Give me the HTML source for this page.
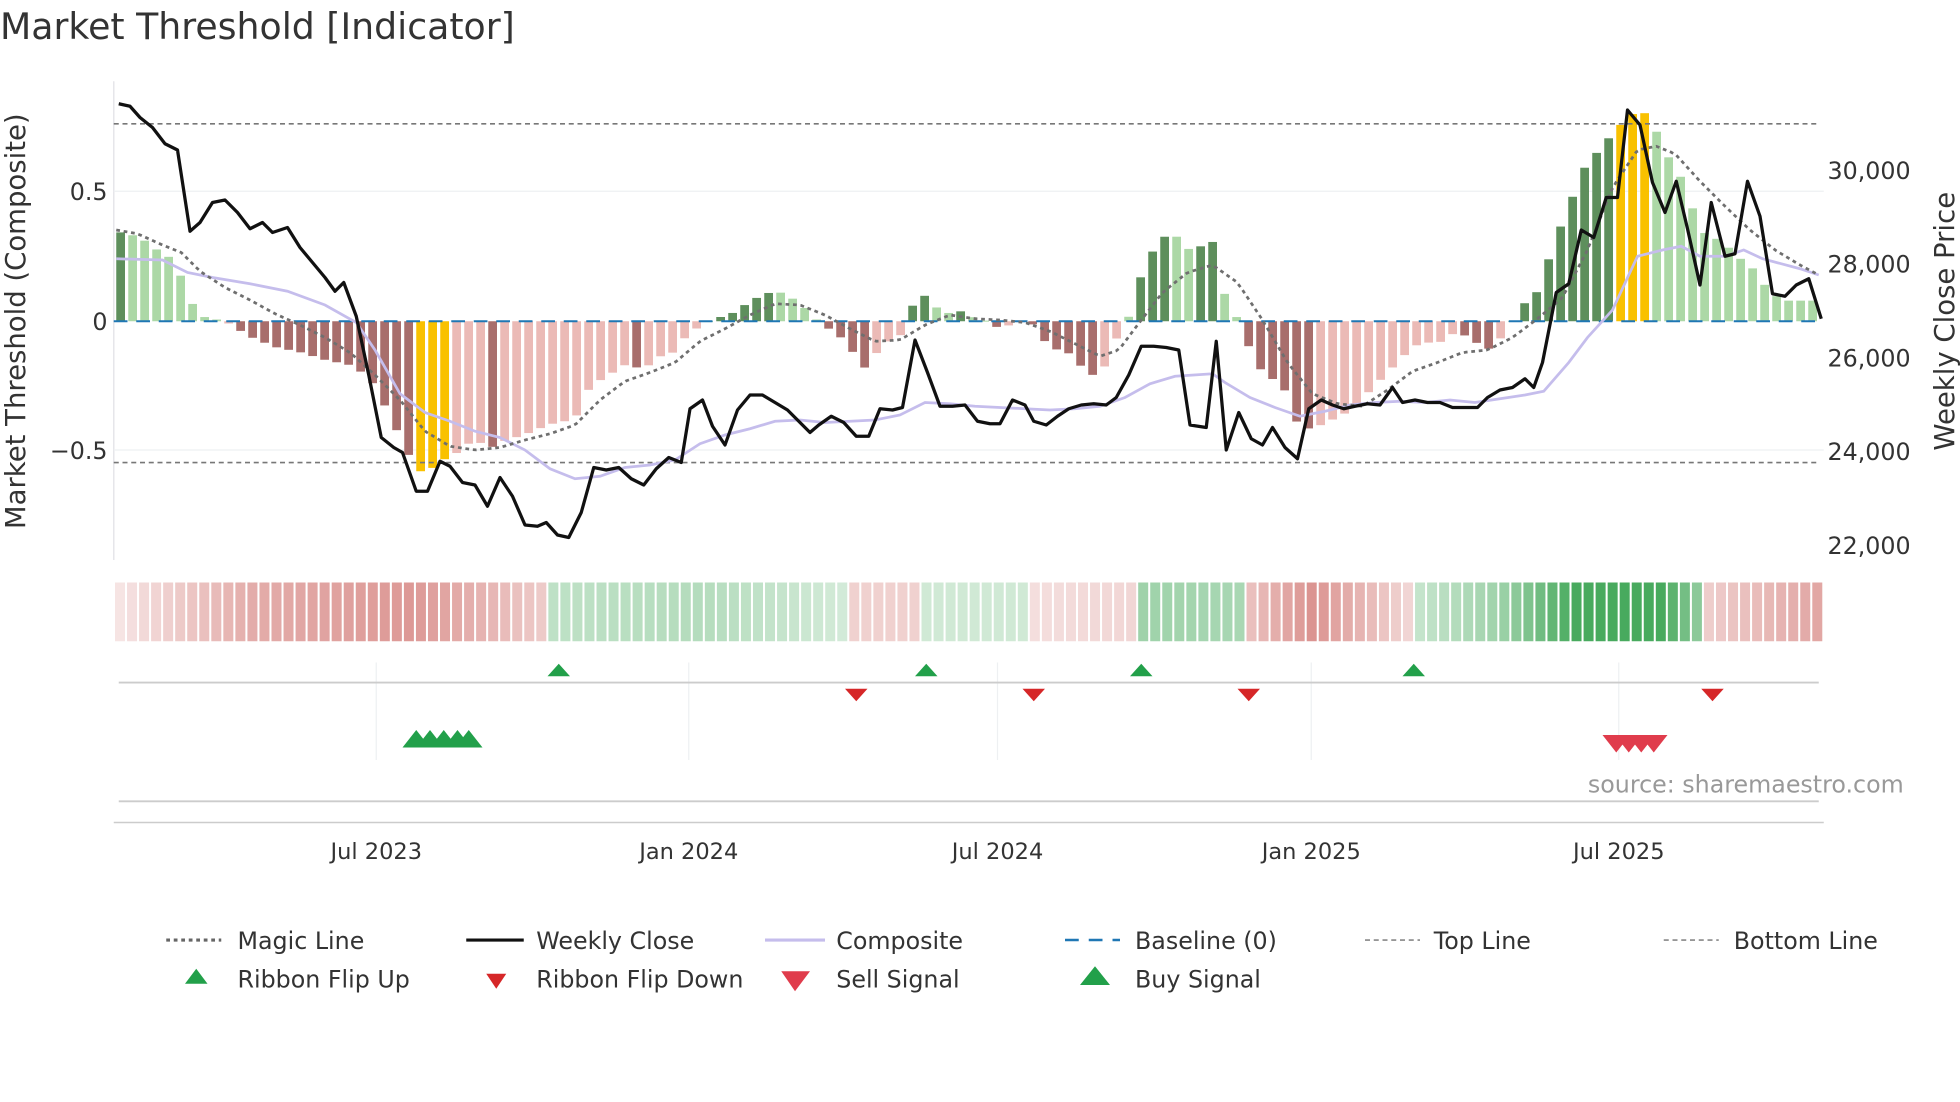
<!DOCTYPE html>
<html><head><meta charset="utf-8"><style>
html,body{margin:0;padding:0;background:#fff;width:1960px;height:1102px;overflow:hidden}
svg{display:block}
text{font-family:"DejaVu Sans","Liberation Sans",sans-serif;fill:#333}
</style></head><body>
<svg id="s" width="1960" height="1102" viewBox="0 0 1568 881.6" xmlns="http://www.w3.org/2000/svg">
<text x="0" y="31" font-size="29">Market Threshold [Indicator]</text>
<line x1="91" y1="65" x2="91" y2="448" stroke="#e6e6ea" stroke-width="1.2"/>
<line x1="91" y1="153" x2="1459" y2="153" stroke="#eef0f2" stroke-width="1"/>
<line x1="91" y1="360" x2="1459" y2="360" stroke="#eef0f2" stroke-width="1"/>
<g id="bars"></g>
<line x1="91" y1="99" x2="1456" y2="99" stroke="#777" stroke-width="1.3" stroke-dasharray="4,3"/>
<line x1="91" y1="370" x2="1456" y2="370" stroke="#777" stroke-width="1.3" stroke-dasharray="4,3"/>
<line x1="91" y1="257" x2="1459" y2="257" stroke="#1f77b4" stroke-width="1.6" stroke-dasharray="11,7"/>
<g id="lines"></g>
<text x="86" y="160" font-size="19" text-anchor="end">0.5</text>
<text x="86" y="264" font-size="19" text-anchor="end">0</text>
<text x="86" y="367" font-size="19" text-anchor="end">−0.5</text>
<text x="1462" y="143" font-size="19">30,000</text>
<text x="1462" y="218" font-size="19">28,000</text>
<text x="1462" y="293" font-size="19">26,000</text>
<text x="1462" y="368" font-size="19">24,000</text>
<text x="1462" y="443" font-size="19">22,000</text>
<text transform="translate(20,257) rotate(-90)" font-size="22" text-anchor="middle">Market Threshold (Composite)</text>
<text transform="translate(1563,257) rotate(-90)" font-size="22" text-anchor="middle">Weekly Close Price</text>
<g id="rib"></g>
<g stroke="#eef0f2" stroke-width="1">
<line x1="301" y1="530" x2="301" y2="608"/><line x1="551" y1="530" x2="551" y2="608"/><line x1="798" y1="530" x2="798" y2="608"/><line x1="1049" y1="530" x2="1049" y2="608"/><line x1="1295" y1="530" x2="1295" y2="608"/>
</g>
<line x1="95" y1="546" x2="1455" y2="546" stroke="#ccc" stroke-width="1.5"/>
<line x1="95" y1="641" x2="1455" y2="641" stroke="#ccc" stroke-width="1.5"/>
<line x1="91" y1="658" x2="1459" y2="658" stroke="#ccc" stroke-width="1.2"/>
<g id="sig"></g>
<text x="1523" y="634" font-size="19" text-anchor="end" style="fill:#999">source: sharemaestro.com</text>
<g font-size="18" text-anchor="middle">
<text x="301" y="687">Jul 2023</text><text x="551" y="687">Jan 2024</text><text x="798" y="687">Jul 2024</text><text x="1049" y="687">Jan 2025</text><text x="1295" y="687">Jul 2025</text>
</g>
<g font-size="19">
<line x1="133" y1="752" x2="177" y2="752" stroke="#666" stroke-width="2.5" stroke-dasharray="3,3"/><text x="190" y="759">Magic Line</text>
<line x1="373" y1="752" x2="419" y2="752" stroke="#111" stroke-width="2.5"/><text x="429" y="759">Weekly Close</text>
<line x1="612" y1="752" x2="660" y2="752" stroke="#c5bdec" stroke-width="2.5"/><text x="669" y="759">Composite</text>
<line x1="852" y1="752" x2="896" y2="752" stroke="#1f77b4" stroke-width="2" stroke-dasharray="11,8"/><text x="908" y="759">Baseline (0)</text>
<line x1="1092" y1="752" x2="1136" y2="752" stroke="#888" stroke-width="1.3" stroke-dasharray="4,3"/><text x="1147" y="759">Top Line</text>
<line x1="1331" y1="752" x2="1375" y2="752" stroke="#888" stroke-width="1.3" stroke-dasharray="4,3"/><text x="1387" y="759">Bottom Line</text>
<polygon points="157,775 166,787 148,787" fill="#22a04a"/><text x="190" y="790">Ribbon Flip Up</text>
<polygon points="389,779 405,779 397,791" fill="#d62728"/><text x="429" y="790">Ribbon Flip Down</text>
<polygon points="625,777 648,777 636,793" fill="#e03c4c"/><text x="669" y="790">Sell Signal</text>
<polygon points="876,773 888,788 864,788" fill="#22a04a"/><text x="908" y="790">Buy Signal</text>
</g>
</svg>
<script>
var NS="http://www.w3.org/2000/svg";
function el(p,t,a){var e=document.createElementNS(NS,t);for(var k in a)e.setAttribute(k,a[k]);document.getElementById(p).appendChild(e);return e;}
function interp(P,x){if(x<=P[0])return P[1];for(var i=0;i<P.length-2;i+=2){if(x>=P[i]&&x<=P[i+2]){var t=(x-P[i])/(P[i+2]-P[i]);return P[i+1]+t*(P[i+3]-P[i+1]);}}return P[P.length-1];}
var comp=[93,.35,100,.34,110,.33,120,.3,130,.26,140,.24,150,.1,160,.02,170,.01,180,0,190,-.03,200,-.06,210,-.08,220,-.1,240,-.12,260,-.15,280,-.17,290,-.2,300,-.25,310,-.35,320,-.45,330,-.55,340,-.6,350,-.55,370,-.5,380,-.45,390,-.5,400,-.47,420,-.44,440,-.4,460,-.38,470,-.27,480,-.23,490,-.2,500,-.17,510,-.18,520,-.17,530,-.13,540,-.12,550,-.05,560,-.02,570,.01,580,.02,590,.04,600,.08,610,.1,620,.12,630,.1,640,.07,650,.02,660,-.02,670,-.05,680,-.1,690,-.19,700,-.13,710,-.08,720,-.06,730,.06,740,.1,750,.05,760,.03,770,.04,780,.01,790,0,800,-.03,810,-.01,820,0,830,-.02,840,-.12,850,-.1,860,-.15,870,-.2,880,-.22,890,-.1,900,0,905,.03,913,.18,922,.27,932,.33,941,.33,950,.28,960,.29,970,.31,980,.1,990,.01,1000,-.11,1010,-.2,1020,-.23,1030,-.28,1040,-.43,1050,-.41,1060,-.4,1070,-.37,1080,-.35,1090,-.3,1100,-.25,1110,-.2,1120,-.15,1130,-.1,1140,-.08,1150,-.09,1160,-.05,1170,-.05,1180,-.08,1190,-.11,1200,-.07,1210,0,1217,.07,1226,.07,1236,.2,1246,.34,1255,.44,1265,.58,1275,.64,1285,.7,1294,.75,1304,.8,1313,.82,1322,.78,1331,.66,1341,.6,1350,.5,1360,.35,1370,.33,1380,.3,1390,.25,1400,.22,1410,.15,1420,.1,1430,.08,1440,.08,1455,.08];
var N=142,prev=0;
for(var i=0;i<N;i++){var x=93+i*9.6,cx=x+3.5,v=interp(comp,cx);var y0=257,y=257-v*206;var c;
 if(v>0.74||v<-0.53)c="#f9c100";else if(v>=0)c=(Math.abs(v)>Math.abs(prev)+0.005)?"#5e8f5c":"#acd8a6";else c=(Math.abs(v)>Math.abs(prev)+0.005)?"#a86e6c":"#ebbab6";
 prev=v;el("bars","rect",{x:x,y:Math.min(y,y0),width:7,height:Math.max(Math.abs(y-y0),0.8),fill:c});}
function pl(P,attrs){var s="";for(var i=0;i<P.length;i+=2)s+=P[i]+","+P[i+1]+" ";attrs.points=s;attrs.fill="none";el("lines","polyline",attrs);}
function smooth(P){var o=[];for(var x=P[0];x<=P[P.length-2];x+=4){o.push(x,interp(P,x));}return o;}
var magic=[93,184,110,187,130,196,145,202,160,217,180,230,200,240,220,251,240,260,260,270,280,282,300,300,320,320,340,345,360,357,380,360,400,358,420,352,440,347,460,340,480,320,500,305,520,298,540,290,560,273,580,263,600,252,620,243,640,244,660,252,680,263,700,273,720,272,740,260,760,252,780,255,800,256,820,258,840,265,860,275,880,285,895,280,910,260,930,234,950,218,970,212,990,226,1010,256,1030,290,1050,315,1070,323,1090,325,1110,312,1130,297,1150,290,1170,282,1190,280,1210,270,1230,255,1250,238,1270,200,1290,150,1310,120,1325,117,1340,123,1360,145,1380,165,1400,184,1420,200,1440,212,1455,220];
var cl=[93,207,130,208,150,218,170,222,200,227,230,233,260,244,285,258,300,280,320,315,340,330,360,337,380,345,400,350,420,360,440,375,460,383,480,381,500,374,520,372,540,368,560,355,580,348,600,343,620,337,640,336,660,338,680,337,700,336,720,332,740,322,760,323,780,325,800,326,820,327,840,328,860,327,880,325,900,318,920,307,940,301,970,299,980,306,1000,318,1020,326,1040,333,1060,329,1080,324,1100,322,1120,321,1140,322,1160,320,1180,322,1200,319,1220,316,1235,313,1255,290,1270,270,1290,248,1310,205,1330,200,1345,197,1360,205,1380,205,1395,200,1410,207,1440,215,1455,220];
var wc=[95,83,104,85,112,94,122,102,132,115,142,120,152,185,160,178,170,162,180,160,190,170,200,183,210,178,218,186,230,182,240,198,250,210,260,222,268,233,275,226,285,253,295,300,305,350,315,358,322,362,333,393,342,393,352,369,360,373,370,386,380,388,390,405,400,382,410,397,420,420,430,421,437,418,446,428,455,430,465,410,475,374,485,376,495,374,505,383,515,388,525,375,535,366,545,370,552,327,562,320,570,341,580,356,590,328,600,316,610,316,620,322,630,328,640,338,648,346,655,340,665,333,675,338,685,349,695,349,704,327,714,328,722,326,732,272,742,298,752,325,762,325,772,324,782,337,792,339,800,339,810,320,820,324,827,337,837,340,846,333,855,327,865,324,875,323,885,324,893,318,903,300,913,277,923,277,933,278,943,280,952,340,965,342,973,273,981,360,991,330,1001,351,1010,356,1018,342,1028,358,1038,367,1047,327,1057,320,1066,324,1075,327,1084,325,1094,323,1104,324,1114,310,1122,322,1132,320,1142,322,1152,322,1162,326,1172,326,1182,326,1190,318,1200,312,1210,310,1220,303,1227,310,1234,290,1245,234,1255,227,1265,184,1275,190,1285,158,1294,158,1302,88,1312,100,1322,146,1332,170,1341,145,1350,183,1360,228,1369,162,1380,205,1388,203,1398,145,1408,173,1418,235,1428,237,1437,228,1447,223,1457,255];
pl(cl,{stroke:"#c5bdec","stroke-width":2.2});
pl(smooth(magic),{stroke:"#6f6f6f","stroke-width":2.2,"stroke-dasharray":"3,3"});
pl(wc,{stroke:"#111","stroke-width":2.6,"stroke-linejoin":"round"});
var segs=[[91,441,'r',[91,.15,200,.5,330,.62,441,.3]],[441,680,'g',[441,.3,560,.35,680,.2]],[680,737,'r',[680,.28,737,.28]],[737,823,'g',[737,.22,823,.22]],[823,908,'r',[823,.2,908,.25]],[908,994,'g',[908,.45,994,.4]],[994,1127,'r',[994,.35,1050,.65,1127,.25]],[1127,1365,'g',[1127,.25,1200,.45,1260,.85,1330,.85,1365,.45]],[1365,1460,'r',[1365,.3,1460,.55]]];
function mix(c,t){return "rgb("+c.map(function(v){return Math.round(255+(v-255)*t)}).join(",")+")";}
for(var i=0;i<N;i++){var x=92+i*9.63,cx=x+4;for(var j=0;j<segs.length;j++){var s=segs[j];if(cx>=s[0]&&cx<s[1]){var t=interp(s[3],cx);var col=s[2]=='r'?mix([200,90,85],t):mix([40,155,65],t);el("rib","rect",{x:x,y:466,width:8,height:47,fill:col});break;}}}
function up(cx,cy,w,h,c){el("sig","polygon",{points:cx+","+(cy-h/2)+" "+(cx+w/2)+","+(cy+h/2)+" "+(cx-w/2)+","+(cy+h/2),fill:c});}
function dn(cx,cy,w,h,c){el("sig","polygon",{points:(cx-w/2)+","+(cy-h/2)+" "+(cx+w/2)+","+(cy-h/2)+" "+cx+","+(cy+h/2),fill:c});}
[447,741,913,1131].forEach(function(x){up(x,536,18,10,"#22a04a");});
[685,827,999,1370].forEach(function(x){dn(x,556,18,10,"#d62728");});
[333,344,355,366,375].forEach(function(x){up(x,591,22,14,"#22a04a");});
[1293,1303,1313,1323].forEach(function(x){dn(x,595,22,14,"#e03c4c");});
</script>
</body></html>
